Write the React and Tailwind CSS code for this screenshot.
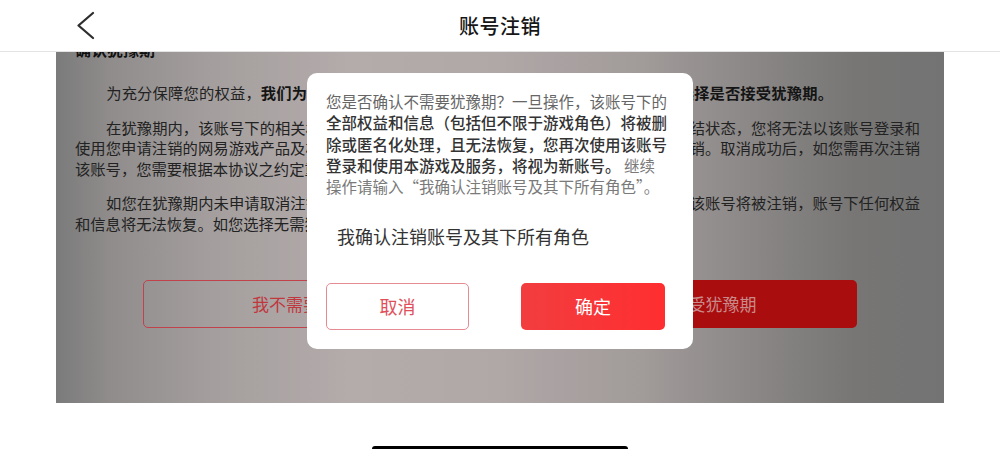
export default function App() {
  const font = { fontFamily: '"Noto Sans CJK SC", "Noto Sans", sans-serif' };
  return (
    <div
      className="relative w-[1000px] h-[449px] overflow-hidden bg-white"
      style={font}
    >
      {/* Header */}
      <div className="relative h-[52px] border-b border-[#e3e3e3] flex items-center justify-center bg-white z-10">
        <svg
          className="absolute left-[74px] top-[11px]"
          width="24"
          height="30"
          viewBox="0 0 24 30"
          fill="none"
        >
          <polyline
            points="19,2 4.5,14.5 19,27"
            stroke="#2e2e2e"
            strokeWidth="2.3"
            strokeLinecap="round"
            strokeLinejoin="round"
          />
        </svg>
        <div className="text-[20px] font-medium text-[#161616] leading-none tracking-[0.5px]">
          账号注销
        </div>
      </div>

      {/* Dimmed page content */}
      <div className="mx-[56px] h-[351px] overflow-hidden bg-[linear-gradient(90deg,#7b7b7b_0%,#8f8c8b_6%,#a39e9d_17%,#b4abab_33%,#b0a7a7_50%,#a19b9a_66%,#8b8887_78%,#777675_90%,#737373_100%)]">
        <div className="pl-[19px] w-[864px] text-[15.3px] leading-[20.5px] text-[#222]">
          <div className="mt-[-13px] h-[20px] text-[16px] leading-[20px] font-bold text-[#111]">
            确认犹豫期
          </div>
          <div className="mt-[23px] w-[758px] text-justify [text-align-last:justify] whitespace-nowrap">
            <span className="inline-block w-[31px]"></span>
            为充分保障您的权益，
            <span className="font-bold text-[#141414]">
              我们为您设置了十五天的犹豫期，请您在仔细阅读相关说明并选择是否接受犹豫期。
            </span>
          </div>
          <div className="mt-[14px] w-[845px]">
            <div className="text-justify [text-align-last:justify] whitespace-nowrap">
              <span className="inline-block w-[31px]"></span>
              在犹豫期内，该账号下的相关权益和信息将继续予以保留，但该账号将处于注销中的冻结状态，您将无法以该账号登录和
            </div>
            <div className="text-justify [text-align-last:justify] whitespace-nowrap">
              使用您申请注销的网易游戏产品及相关的服务。如需恢复使用，您可在犹豫期内申请取消注销。取消成功后，如您需再次注销
            </div>
            <div className="whitespace-nowrap">
              该账号，您需要根据本协议之约定重新申请注销。
            </div>
          </div>
          <div className="mt-[14px] w-[845px]">
            <div className="text-justify [text-align-last:justify] whitespace-nowrap">
              <span className="inline-block w-[31px]"></span>
              如您在犹豫期内未申请取消注销，则犹豫期届满后将自动视为您已确认注销申请，届时该账号将被注销，账号下任何权益
            </div>
            <div className="whitespace-nowrap">
              和信息将无法恢复。如您选择无需犹豫期，请点击下方按钮。
            </div>
          </div>
        </div>
        <div className="mt-[47px] flex justify-center gap-[40px]">
          <div className="w-[337px] h-[48px] rounded-[5px] border-[1.5px] border-[#c1424a] flex items-center justify-center text-[17px] text-[#c0383e]">
            我不需要犹豫期
          </div>
          <div className="w-[337px] h-[48px] rounded-[5px] bg-[#a90d0e] flex items-center justify-center text-[17px] text-[#c98a8a]">
            我选择接受犹豫期
          </div>
        </div>
      </div>

      {/* Bottom safe area */}
      <div className="h-[46px] flex justify-center pt-[43px]">
        <div className="w-[256px] h-[6px] rounded-full bg-black"></div>
      </div>

      {/* Modal */}
      <div className="absolute left-[307px] top-[73px] w-[386px] h-[276px] rounded-[10px] bg-white pl-[19px] pt-[18px]">
        <div className="w-[346px] text-[15.5px] leading-[21.3px]">
          <span className="text-[#666]">
            您是否确认不需要犹豫期？一旦操作，该账号下的
          </span>
          <span className="text-[#333] font-medium">
            全部权益和信息（包括但不限于游戏角色）将被删除或匿名化处理，且无法恢复，您再次使用该账号登录和使用本游戏及服务，将视为新账号。
          </span>
          <span className="text-[#7a7a7a]">
            {" "}继续
            <br />
            操作请输入“我确认注销账号及其下所有角色”。
          </span>
        </div>
        <div className="mt-[27px] pl-[11px] text-[18px] leading-[24px] text-[#333]">
          我确认注销账号及其下所有角色
        </div>
        <div className="mt-[35px] w-[339px] flex justify-between">
          <div className="w-[143px] h-[47px] rounded-[5px] border border-[#e68b93] flex items-center justify-center text-[18px] text-[#e0505a]">
            取消
          </div>
          <div className="w-[144px] h-[47px] rounded-[5px] bg-[linear-gradient(90deg,#f23d3f,#ff2e30)] flex items-center justify-center text-[18px] text-white">
            确定
          </div>
        </div>
      </div>
    </div>
  );
}
